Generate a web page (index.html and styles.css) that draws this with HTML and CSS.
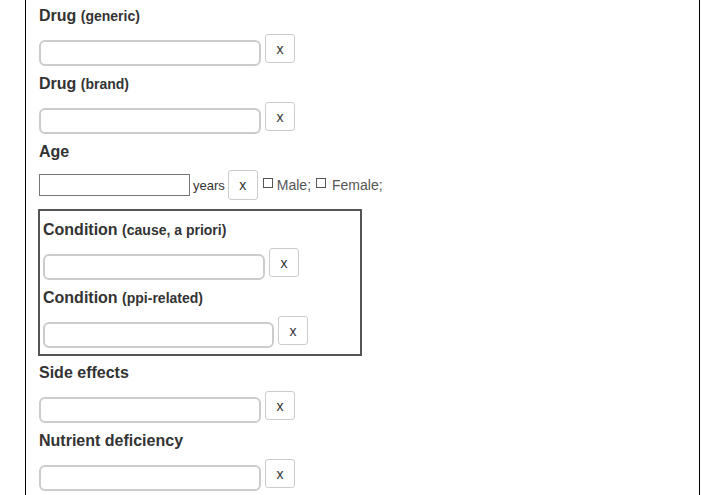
FILE: index.html
```html
<!DOCTYPE html>
<html>
<head>
<meta charset="utf-8">
<link rel="stylesheet" href="styles.css">
</head>
<body>
<div class="page">
  <div class="field">
    <div class="label">Drug <span class="sub">(generic)</span></div>
    <div class="row"><input class="text" type="text"><button class="clear">x</button></div>
  </div>
  <div class="field">
    <div class="label">Drug <span class="sub">(brand)</span></div>
    <div class="row"><input class="text" type="text"><button class="clear">x</button></div>
  </div>
  <div class="field">
    <div class="label">Age</div>
    <div class="row age-row">
      <input class="age" type="text"><span class="unit">years</span><button class="clear age-clear">x</button><span class="box box-male"></span><span class="opt opt-male">Male;</span><span class="box box-female"></span><span class="opt opt-female">Female;</span>
    </div>
  </div>
  <div class="group">
    <div class="field">
      <div class="label">Condition <span class="sub">(cause, a priori)</span></div>
      <div class="row"><input class="text" type="text"><button class="clear">x</button></div>
    </div>
    <div class="field">
      <div class="label">Condition <span class="sub">(ppi-related)</span></div>
      <div class="row"><input class="text wide" type="text"><button class="clear">x</button></div>
    </div>
  </div>
  <div class="field">
    <div class="label">Side effects</div>
    <div class="row"><input class="text" type="text"><button class="clear">x</button></div>
  </div>
  <div class="field">
    <div class="label">Nutrient deficiency</div>
    <div class="row"><input class="text" type="text"><button class="clear">x</button></div>
  </div>
</div>
</body>
</html>
```

FILE: styles.css
```css
html, body {
  margin: 0;
  background: #fff;
}
body {
  font-family: "Liberation Sans", Arial, sans-serif;
  color: #333;
}
.page {
  margin-left: 25px;
  width: 675px;
  box-sizing: border-box;
  border-left: 1px solid #000;
  border-right: 1px solid #000;
  min-height: 495px;
  padding: 7px 0 0 13px;
}
.label {
  font-size: 16px;
  font-weight: bold;
  line-height: 18px;
  margin-bottom: 9px;
  white-space: nowrap;
}
.label .sub {
  font-size: 14px;
}
.row {
  display: flex;
  align-items: flex-start;
  margin-bottom: 9px;
}
.text {
  width: 222px;
  height: 26px;
  margin: 6px 0 0 0;
  border: 2px solid #ccc;
  border-radius: 6px;
  box-sizing: border-box;
  padding: 0 6px;
  background: #fff;
  outline: none;
}
.text.wide {
  width: 231px;
}
.clear {
  width: 30px;
  height: 29px;
  margin-left: 4px;
  padding: 0;
  border: 1px solid #ccc;
  border-radius: 3px;
  background: #fff;
  font-family: "Liberation Sans", Arial, sans-serif;
  font-size: 14px;
  color: #333;
  box-sizing: border-box;
}
.age-row {
  align-items: center;
  height: 30px;
}
.age {
  width: 151px;
  height: 22px;
  margin: 0;
  border: 1px solid #767676;
  border-radius: 0;
  box-sizing: border-box;
  padding: 0 2px;
  background: #fff;
  outline: none;
}
.unit {
  margin-left: 3px;
  font-size: 13px;
  color: #333;
}
.age-clear {
  height: 30px;
  margin-left: 3px;
}
.box {
  display: inline-block;
  width: 10px;
  height: 10px;
  border: 1px solid #555;
  box-sizing: border-box;
  margin-left: 5px;
  margin-bottom: 4px;
}
.box-female {
  margin-left: 5px;
}
.opt {
  font-size: 14px;
  color: #555;
  margin-left: 4px;
}
.opt-female {
  margin-left: 6px;
}
.group {
  width: 324px;
  margin: 0 0 8px -1px;
  box-sizing: border-box;
  border: 2px solid #555;
  padding: 10px 0 6px 3px;
}
.group .field:last-child .row {
  margin-bottom: 0;
}
```
